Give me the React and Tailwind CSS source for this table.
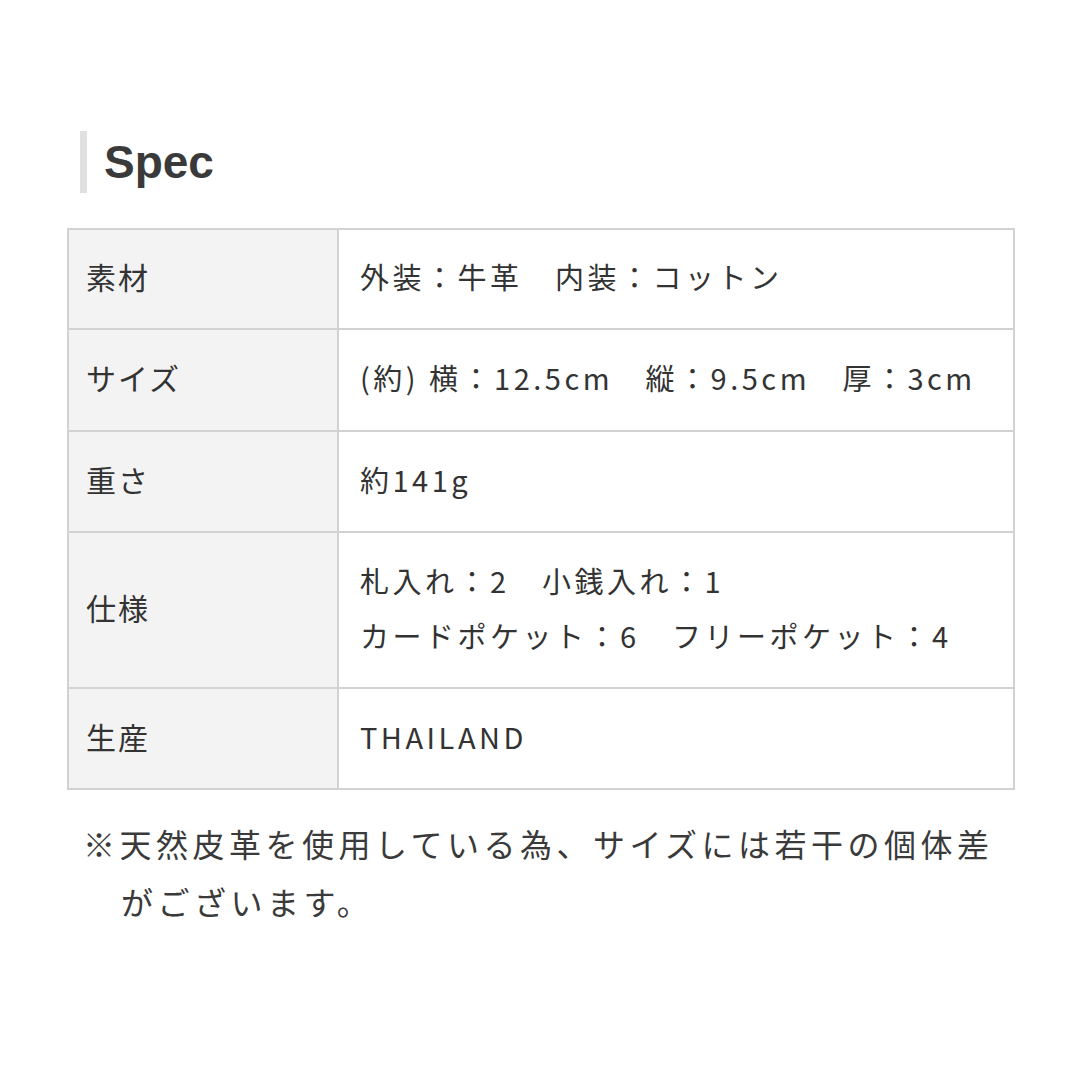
import React from 'react';

const rows = [
  { label: '素材', value: ['外装：牛革　内装：コットン'], h: 'h-[100px]' },
  { label: 'サイズ', value: ['(約) 横：12.5cm　縦：9.5cm　厚：3cm'], h: 'h-[102px]' },
  { label: '重さ', value: ['約141g'], h: 'h-[101px]' },
  { label: '仕様', value: ['札入れ：2　小銭入れ：1', 'カードポケット：6　フリーポケット：4'], h: 'h-[156px]' },
  { label: '生産', value: ['THAILAND'], h: 'h-[101px]' },
];

export default function App() {
  return (
    <div className="w-[1080px] h-[1080px] bg-white text-[#333] font-['Noto_Sans_CJK_JP','Noto_Sans',sans-serif]">
      <div className="pt-[131px] pl-[80px]">
        <div className="flex items-center h-[62px] border-l-[7px] border-[#e0e0e0] pl-[17px]">
          <h2 className="text-[46px] font-bold leading-none text-[#3a3a3a] font-['Liberation_Sans',sans-serif]">Spec</h2>
        </div>
      </div>

      <table className="mt-[35px] ml-[67px] w-[948px] border-collapse">
        <tbody>
          {rows.map(r => (
            <tr key={r.label} className={r.h}>
              <td className="w-[270px] bg-[#f3f3f3] border-2 border-[#d2d2d2] pl-[17px] pb-[5px] text-[30px] tracking-[2px] align-middle">
                {r.label}
              </td>
              <td className="border-2 border-[#d2d2d2] pl-[21px] pb-[5px] text-[29px] tracking-[3.5px] leading-[55px] align-middle">
                {r.value.map(v => <div key={v}>{v}</div>)}
              </td>
            </tr>
          ))}
        </tbody>
      </table>

      <p className="mt-[24px] ml-[83px] w-[935px] pl-[38px] -indent-[38px] text-[32px] tracking-[4.5px] leading-[58px] text-[#3a3a3a]">
        ※天然皮革を使用している為、サイズには若干の個体差がございます。
      </p>
    </div>
  );
}
